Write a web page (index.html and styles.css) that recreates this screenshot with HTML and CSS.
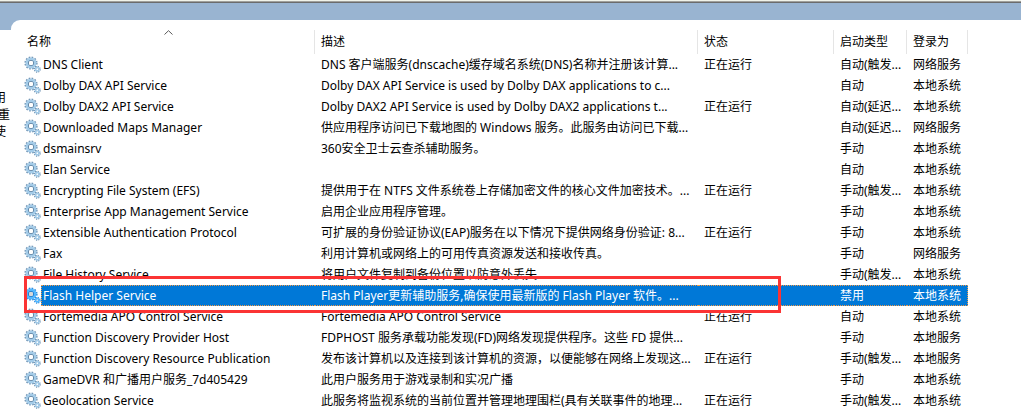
FILE: index.html
```
<!DOCTYPE html>
<html lang="zh-CN">
<head>
<meta charset="utf-8">
<title>服务</title>
<link rel="stylesheet" href="styles.css">
</head>
<body>
<svg class="defs" aria-hidden="true">
  <symbol id="gear" viewBox="0 0 17 17">
    <circle class="teeth" cx="7" cy="7" r="5.7" stroke-width="1.8" stroke-dasharray="1.6 1.38"/>
    <circle class="body" cx="7" cy="7" r="3.9" stroke-width="3.2"/>
    <circle class="rim" cx="7" cy="7" r="2.6" stroke-width="1"/>
    <circle class="hub" cx="7" cy="7" r="2.2"/>
    <circle class="teeth" cx="13.3" cy="13.3" r="2.7" stroke-width="1.6" stroke-dasharray="1.1 1.02"/>
    <circle class="body" cx="13.3" cy="13.3" r="1.6" stroke-width="1.8"/>
    <circle class="hub" cx="13.3" cy="13.3" r=".7"/>
  </symbol>
</svg>
<div class="frame"></div>
<div class="window">
  <aside class="sidebar">
    <p>用</p>
    <p class="full">重</p>
    <p>使</p>
  </aside>
  <main class="panel">
    <table class="services">
      <colgroup><col class="c-name"><col><col class="c-status"><col class="c-start"><col class="c-logon"></colgroup>
      <thead>
        <tr>
          <th class="sorted"><button type="button">名称</button><svg class="caret" viewBox="0 0 9 5" aria-hidden="true"><path d="M.5 4.5 4.5.7l4 3.8"/></svg></th>
          <th><button type="button">描述</button></th>
          <th><button type="button">状态</button></th>
          <th><button type="button">启动类型</button></th>
          <th><button type="button">登录为</button></th>
        </tr>
      </thead>
      <tbody>
        <tr><td><div class="name"><svg class="icon"><use href="#gear"/></svg><span>DNS Client</span></div></td><td>DNS 客户端服务(dnscache)缓存域名系统(DNS)名称并注册该计算...</td><td>正在运行</td><td>自动(触发...</td><td>网络服务</td></tr>
        <tr><td><div class="name"><svg class="icon"><use href="#gear"/></svg><span>Dolby DAX API Service</span></div></td><td>Dolby DAX API Service is used by Dolby DAX applications to c...</td><td></td><td>自动</td><td>本地系统</td></tr>
        <tr><td><div class="name"><svg class="icon"><use href="#gear"/></svg><span>Dolby DAX2 API Service</span></div></td><td>Dolby DAX2 API Service is used by Dolby DAX2 applications t...</td><td>正在运行</td><td>自动(延迟...</td><td>本地系统</td></tr>
        <tr><td><div class="name"><svg class="icon"><use href="#gear"/></svg><span>Downloaded Maps Manager</span></div></td><td>供应用程序访问已下载地图的 Windows 服务。此服务由访问已下载...</td><td></td><td>自动(延迟...</td><td>网络服务</td></tr>
        <tr><td><div class="name"><svg class="icon"><use href="#gear"/></svg><span>dsmainsrv</span></div></td><td>360安全卫士云查杀辅助服务。</td><td></td><td>手动</td><td>本地系统</td></tr>
        <tr><td><div class="name"><svg class="icon"><use href="#gear"/></svg><span>Elan Service</span></div></td><td></td><td></td><td>自动</td><td>本地系统</td></tr>
        <tr><td><div class="name"><svg class="icon"><use href="#gear"/></svg><span>Encrypting File System (EFS)</span></div></td><td>提供用于在 NTFS 文件系统卷上存储加密文件的核心文件加密技术。...</td><td>正在运行</td><td>手动(触发...</td><td>本地系统</td></tr>
        <tr><td><div class="name"><svg class="icon"><use href="#gear"/></svg><span>Enterprise App Management Service</span></div></td><td>启用企业应用程序管理。</td><td></td><td>手动</td><td>本地系统</td></tr>
        <tr><td><div class="name"><svg class="icon"><use href="#gear"/></svg><span>Extensible Authentication Protocol</span></div></td><td>可扩展的身份验证协议(EAP)服务在以下情况下提供网络身份验证: 8...</td><td>正在运行</td><td>手动</td><td>本地系统</td></tr>
        <tr><td><div class="name"><svg class="icon"><use href="#gear"/></svg><span>Fax</span></div></td><td>利用计算机或网络上的可用传真资源发送和接收传真。</td><td></td><td>手动</td><td>网络服务</td></tr>
        <tr><td><div class="name"><svg class="icon"><use href="#gear"/></svg><span>File History Service</span></div></td><td>将用户文件复制到备份位置以防意外丢失</td><td></td><td>手动(触发...</td><td>本地系统</td></tr>
        <tr class="selected"><td><div class="name"><svg class="icon"><use href="#gear"/></svg><span>Flash Helper Service</span></div><div class="marker"></div></td><td>Flash Player更新辅助服务,确保使用最新版的 Flash Player 软件。...</td><td></td><td>禁用</td><td>本地系统</td></tr>
        <tr><td><div class="name"><svg class="icon"><use href="#gear"/></svg><span>Fortemedia APO Control Service</span></div></td><td>Fortemedia APO Control Service</td><td>正在运行</td><td>自动</td><td>本地系统</td></tr>
        <tr><td><div class="name"><svg class="icon"><use href="#gear"/></svg><span>Function Discovery Provider Host</span></div></td><td>FDPHOST 服务承载功能发现(FD)网络发现提供程序。这些 FD 提供...</td><td></td><td>手动</td><td>本地服务</td></tr>
        <tr><td><div class="name"><svg class="icon"><use href="#gear"/></svg><span>Function Discovery Resource Publication</span></div></td><td>发布该计算机以及连接到该计算机的资源，以便能够在网络上发现这...</td><td>正在运行</td><td>手动(触发...</td><td>本地服务</td></tr>
        <tr><td><div class="name"><svg class="icon"><use href="#gear"/></svg><span>GameDVR 和广播用户服务_7d405429</span></div></td><td>此用户服务用于游戏录制和实况广播</td><td></td><td>手动</td><td>本地系统</td></tr>
        <tr><td><div class="name"><svg class="icon"><use href="#gear"/></svg><span>Geolocation Service</span></div></td><td>此服务将监视系统的当前位置并管理地理围栏(具有关联事件的地理...</td><td>正在运行</td><td>手动(触发...</td><td>本地系统</td></tr>
      </tbody>
    </table>
  </main>
</div>
</body>
</html>
```
FILE: styles.css
```
* { box-sizing: border-box; }
body {
  margin: 0;
  background: #99b4d1;
  color: #000;
  font: 12px/21px "Noto Sans", "Noto Sans CJK SC", sans-serif;
}
.defs { position: absolute; width: 0; height: 0; }
.frame {
  height: 3px;
  background: #a0a09c;
  border-top: 1px solid #f1f3ea;
  border-bottom: 1px solid #6b6b6b;
}
.window {
  display: grid;
  grid-template-columns: 11px 1fr;
  padding-top: 17px;
}
.sidebar {
  margin-top: 10px;
  padding-top: 59px;
  background: #fff;
  overflow: hidden;
  line-height: 17px;
}
.sidebar p {
  display: flex;
  justify-content: flex-end;
  margin: 0;
  padding-right: 5px;
}
.sidebar .full { padding-right: 1px; }
.panel {
  min-width: 0;
  padding: 10px 53px 0 13px;
  background: #fff;
  border-top-left-radius: 9px;
}
.services {
  width: 100%;
  table-layout: fixed;
  border-collapse: separate;
  border-spacing: 0;
}
.c-name { width: 291px; }
.c-status { width: 136px; }
.c-start { width: 73px; }
.c-logon { width: 61px; }
th {
  position: relative;
  height: 24px;
  padding: 0;
  border-right: 1px solid #e5e5e5;
  font-weight: normal;
  text-align: left;
}
th button {
  display: block;
  width: 100%;
  padding: 0 0 2px 6px;
  border: 0;
  background: none;
  color: inherit;
  font: inherit;
  text-align: left;
}
.sorted button { padding-left: 3px; }
.caret {
  position: absolute;
  top: 0;
  left: 140px;
  width: 9px;
  height: 5px;
  fill: none;
  stroke: #5a5a5a;
}
td {
  height: 21px;
  padding: 0 0 0 6px;
  white-space: nowrap;
}
td:first-child { padding-left: 0; }
.name { display: flex; height: 21px; }
.name span { flex: 1; padding-left: 2px; }
.icon {
  width: 17px;
  height: 17px;
  margin-top: 2px;
}
.teeth { fill: none; stroke: #6f93b3; }
.body { fill: none; stroke: #a3cbe8; }
.rim { fill: none; stroke: #5b7f9f; }
.hub { fill: #fff; }
.selected {
  position: relative;
  color: #fff;
  line-height: 19px;
}
.selected td:not(:first-child),
.selected .name span {
  background: #0078d7;
  border: 0 dotted #f09a4a;
  border-width: 1px 0;
}
.selected .name span { border-left-width: 1px; padding-left: 1px; }
.selected td:last-child { border-right-width: 1px; }
.selected .icon { filter: brightness(.85) saturate(3); }
.marker {
  position: absolute;
  inset: -9px 187px -7px 0;
  border: 3px solid #fb3434;
  pointer-events: none;
}
```
